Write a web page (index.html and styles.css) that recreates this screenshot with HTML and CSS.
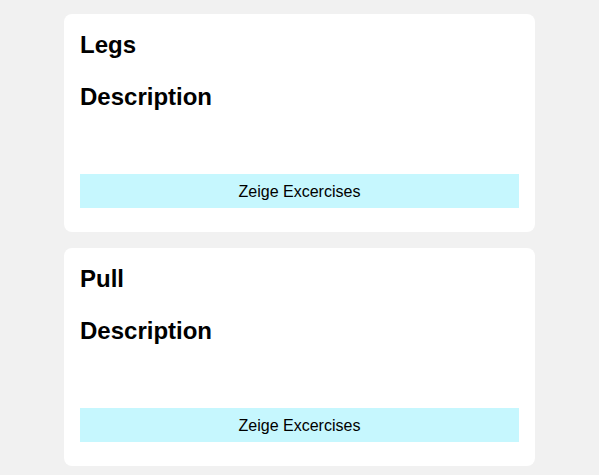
FILE: index.html
```html
<!DOCTYPE html>
<html lang="de">
<head>
<meta charset="utf-8">
<link rel="stylesheet" href="styles.css">
</head>
<body>
<div class="list">
  <div class="card">
    <h2 class="title">Legs</h2>
    <h2 class="desc">Description</h2>
    <button class="btn">Zeige Excercises</button>
  </div>
  <div class="card">
    <h2 class="title">Pull</h2>
    <h2 class="desc">Description</h2>
    <button class="btn">Zeige Excercises</button>
  </div>
</div>
</body>
</html>
```
FILE: styles.css
```css
html, body {
  margin: 0;
  padding: 0;
  background: #f1f1f1;
  font-family: "Liberation Sans", Arial, sans-serif;
  color: #000;
}
.list {
  width: 471px;
  margin: 0 auto;
  padding-top: 14px;
  display: flex;
  flex-direction: column;
  gap: 16px;
}
.card {
  background: #fff;
  border-radius: 8px;
  padding: 17px 16px 24px;
  display: flex;
  flex-direction: column;
}
.title {
  margin: 0;
  font-size: 24px;
  font-weight: bold;
}
.desc {
  margin: 24px 0 0;
  font-size: 24px;
  font-weight: bold;
}
.btn {
  margin-top: 63px;
  height: 34px;
  border: none;
  background: #c6f7fe;
  font-family: "Liberation Sans", Arial, sans-serif;
  font-size: 16px;
  color: #000;
  padding: 2px 0 0;
}
```
